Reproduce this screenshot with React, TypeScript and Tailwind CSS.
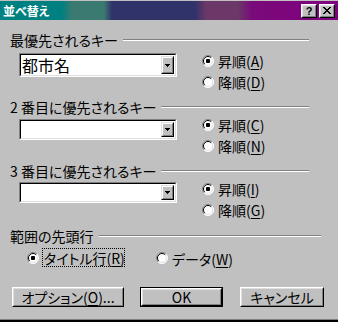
const jp = "font-['Noto_Sans_CJK_JP',sans-serif] [font-feature-settings:'palt']"

const Radio = ({ checked }: { checked?: boolean }) => (
  <svg width="12" height="12" viewBox="0 0 12 12" className="shrink-0">
    <circle cx="6" cy="6" r="5.5" fill="#fff" />
    <path d="M9.9 2.1 A5.5 5.5 0 0 0 2.1 9.9" stroke="#808080" strokeWidth="1" fill="none" />
    <path d="M9.9 2.1 A5.5 5.5 0 0 1 2.1 9.9" stroke="#fff" strokeWidth="1" fill="none" />
    <path d="M9.2 2.8 A4.5 4.5 0 0 0 2.8 9.2" stroke="#000" strokeWidth="1" fill="none" />
    <path d="M9.2 2.8 A4.5 4.5 0 0 1 2.8 9.2" stroke="#dfdfdf" strokeWidth="1" fill="none" />
    {checked && <rect x="4" y="4" width="4" height="4" rx="1" fill="#000" />}
  </svg>
)

const Label = ({ text, hot }: { text: string; hot: string }) => (
  <span className="text-[14px] leading-[16px] text-black whitespace-nowrap">
    {text}(<span className="underline underline-offset-2">{hot}</span>)
  </span>
)

const Option = ({ checked, text, hot }: { checked?: boolean; text: string; hot: string }) => (
  <div className="flex h-[21px] items-center gap-[4px]">
    <Radio checked={checked} />
    <Label text={text} hot={hot} />
  </div>
)

const GroupHeader = ({ label, wide }: { label: string; wide?: boolean }) => (
  <div className={`flex h-[14px] items-center pl-[10px] ${wide ? 'w-[321px]' : 'w-[309px]'}`}>
    <span className="text-[14px] leading-[14px] text-black whitespace-nowrap">{label}</span>
    <div className="ml-[5px] h-[2px] flex-1 border-t border-b border-t-[#808080] border-b-white" />
  </div>
)

const Combo = ({ value, tall }: { value?: string; tall?: boolean }) => (
  <div
    className={`ml-[19px] w-[158px] ${tall ? 'h-[24px]' : 'h-[21px]'} border border-t-[#808080] border-l-[#808080] border-b-white border-r-white`}
  >
    <div className="flex h-full border border-t-black border-l-black border-b-[#dfdfdf] border-r-[#dfdfdf] bg-white">
      <div className="flex flex-1 items-center pl-[1px] text-[16px] leading-[16px] text-black">{value}</div>
      <div className="m-[1px] flex w-[13px] items-center justify-center border border-t-[#dfdfdf] border-l-[#dfdfdf] border-b-black border-r-black bg-[#c0c0c0]">
        <div className="flex h-full w-full items-center justify-center border border-t-white border-l-white border-b-[#808080] border-r-[#808080]">
          <svg width="5" height="3" viewBox="0 0 5 3">
            <path d="M0 0h5v1h-1v1h-1v1h-1v-1h-1v-1h-1z" fill="#000" />
          </svg>
        </div>
      </div>
    </div>
  </div>
)

const Button = ({ children, width, primary }: { children: React.ReactNode; width: string; primary?: boolean }) => (
  <div className={`${width} h-[20px] ${primary ? 'border border-black' : ''}`}>
    <div className="h-full border border-t-white border-l-white border-b-black border-r-black">
      <div className="flex h-full items-center justify-center border border-t-[#dfdfdf] border-l-[#dfdfdf] border-b-[#808080] border-r-[#808080] bg-[#c0c0c0] text-[14px] leading-[14px] text-black">
        {children}
      </div>
    </div>
  </div>
)

const CaptionButton = ({ children }: { children: React.ReactNode }) => (
  <div className="h-[14px] w-[16px] border border-t-white border-l-white border-b-black border-r-black">
    <div className="flex h-full items-center justify-center border border-t-[#dfdfdf] border-l-[#dfdfdf] border-b-[#808080] border-r-[#808080] bg-[#c0c0c0]">
      {children}
    </div>
  </div>
)

export default function App() {
  return (
    <div className={`flex h-[322px] w-[338px] flex-col overflow-hidden bg-[#c0c0c0] ${jp}`}>
      <div className="mt-[1px] flex h-[19px] items-center bg-[linear-gradient(to_right,#008080_0px,#008080_62px,#3b7a70_72px,#3b7a70_104px,#30326a_112px,#30326a_195px,#6b3868_206px,#6b3868_238px,#7a0a7a_252px,#800080_338px)] pl-[3px] pr-[3px]">
        <span className="text-[12px] font-bold leading-[12px] text-white">並べ替え</span>
        <div className="ml-auto flex gap-[2px]">
          <CaptionButton>
            <span className="font-['Liberation_Sans',sans-serif] text-[11px] font-bold leading-[10px] text-black">?</span>
          </CaptionButton>
          <CaptionButton>
            <svg width="8" height="7" viewBox="0 0 8 7">
              <path d="M0 0h2v1h1v1h2v-1h1v-1h2v1h-1v1h-1v1h-1v1h1v1h1v1h1v1h-2v-1h-1v-1h-2v1h-1v1h-2v-1h1v-1h1v-1h1v-1h-1v-1h-1v-1h-1z" fill="#000" />
            </svg>
          </CaptionButton>
        </div>
      </div>

      <div className="mt-[13px]">
        <GroupHeader label="最優先されるキー" />
      </div>
      <div className="flex">
        <div className="mt-[6px]">
          <Combo value="都市名" tall />
        </div>
        <div className="ml-[25px] mt-[3px] flex flex-col">
          <Option checked text="昇順" hot="A" />
          <Option text="降順" hot="D" />
        </div>
      </div>

      <div className="mt-[8px]">
        <GroupHeader label="2 番目に優先されるキー" />
      </div>
      <div className="flex">
        <div className="mt-[5px]">
          <Combo />
        </div>
        <div className="ml-[25px] flex flex-col">
          <Option checked text="昇順" hot="C" />
          <Option text="降順" hot="N" />
        </div>
      </div>

      <div className="mt-[8px]">
        <GroupHeader label="3 番目に優先されるキー" />
      </div>
      <div className="flex">
        <div className="mt-[4px]">
          <Combo />
        </div>
        <div className="ml-[25px] flex flex-col">
          <Option checked text="昇順" hot="I" />
          <Option text="降順" hot="G" />
        </div>
      </div>

      <div className="mt-[9px]">
        <GroupHeader label="範囲の先頭行" wide />
      </div>
      <div className="mt-[5px] flex h-[19px] items-center pl-[27px]">
        <Radio checked />
        <div className="ml-[3px] flex h-[19px] w-[83px] items-center border border-dotted border-black pl-[1px]">
          <Label text="タイトル行" hot="R" />
        </div>
        <div className="ml-[31px]">
          <Radio />
        </div>
        <div className="ml-[4px]">
          <Label text="データ" hot="W" />
        </div>
      </div>

      <div className="mt-[20px] flex pl-[12px]">
        <Button width="w-[112px]">
          オプション(<span className="underline underline-offset-2">O</span>)...
        </Button>
        <div className="ml-[16px]">
          <Button width="w-[83px]" primary>
            OK
          </Button>
        </div>
        <div className="ml-[17px]">
          <Button width="w-[84px]">キャンセル</Button>
        </div>
      </div>

      <div className="mt-auto h-[1px] bg-[#808080]" />
      <div className="h-[2px] bg-black" />
    </div>
  )
}
